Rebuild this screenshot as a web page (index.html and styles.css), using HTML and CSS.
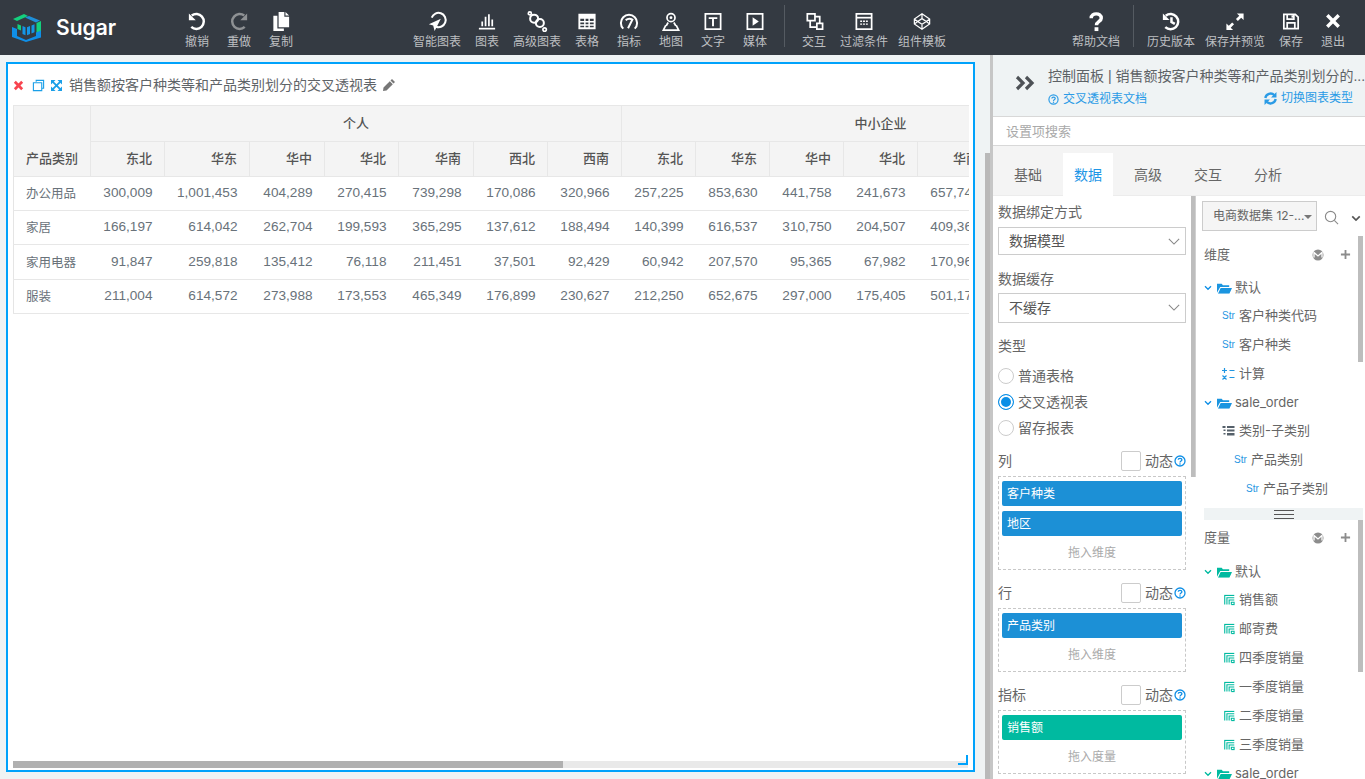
FILE: index.html
```html
<!DOCTYPE html>
<html lang="zh">
<head>
<meta charset="utf-8">
<title>Sugar</title>
<link rel="stylesheet" href="styles.css">
</head>
<body>
<svg class="defs" width="0" height="0" aria-hidden="true">
  <symbol id="folder" viewBox="0 0 16 12"><path d="M0 11V1.500h5l1.300 1.500H13v2H3.400L0 11zM3.900 6H16l-2.800 6H1z" fill="currentColor"/></symbol>
  <symbol id="measure" viewBox="0 0 12 12"><path d="M.8 11V1h10.400M3.200 11V3.600h8M5.600 11V6h5.600M8 11V8.400h3V11H8" fill="none" stroke="currentColor" stroke-width="1.200"/></symbol>
  <symbol id="help" viewBox="0 0 12 12"><circle cx="6" cy="6" r="5" fill="none" stroke="currentColor" stroke-width="1.300"/><path d="M4.200 4.800C4.200 2.900 7.900 2.900 7.900 4.800 7.900 6 6 6 6 7.500" fill="none" stroke="currentColor" stroke-width="1.300"/><circle cx="6" cy="9" r=".8" fill="currentColor"/></symbol>
  <symbol id="chev" viewBox="0 0 12 8"><path d="M1.500 1.500L6 6l4.500-4.500" fill="none" stroke="currentColor" stroke-width="2"/></symbol>
  <symbol id="thin" viewBox="0 0 14 8"><path d="M1 1l6 6 6-6" fill="none" stroke="currentColor" stroke-width="1.300"/></symbol>
  <symbol id="mono" viewBox="0 0 12 12"><circle cx="6" cy="6" r="5.500" fill="currentColor"/><path d="M2 8.500V3.500L6 7l4-3.500v5" fill="none" stroke="#fff" stroke-width="1.300"/></symbol>
  <symbol id="plus" viewBox="0 0 12 12"><path d="M6 1v10M1 6h10" stroke="currentColor" stroke-width="2"/></symbol>
</svg>

<header class="topbar">
  <div class="logo">
    <svg class="logo-mark" viewBox="0 0 29 29">
      <path d="M1 6L12 1l4 2L5 8z" fill="#14d07e"/>
      <path d="M13 4.500L17 3l11 4.500-4 2z" fill="#1f8fd8"/>
      <path d="M24.500 10L29 8v10l-4.500 2z" fill="#14d07e"/>
      <path d="M0 14l5 2v7l9 4 10-4v-3.500l5-2V24.500L14 29 0 24z" fill="#0f8fe8"/>
      <path d="M5.500 11L9 12.500v5l-3.500-1.500z" fill="#14d07e"/>
      <path d="M10.500 13l3 1.200v8l-3-1.200zM15 14.200l3-1.200v8l-3 1.200zM19.500 12.500l3-1.200v8l-3 1.200z" fill="#1596e6"/>
    </svg>
    <span class="logo-text">Sugar</span>
  </div>

  <nav class="tool-group">
    <div class="tool"><svg class="ic" viewBox="0 0 22 22"><path d="M5.500 4.800A7.800 7.800 0 1 1 5 16.700"/><path class="solid" d="M2.500 2.500v7.200h7.200z"/></svg><span>撤销</span></div>
    <div class="tool is-off"><svg class="ic" viewBox="0 0 22 22"><path d="M16.500 4.800A7.800 7.800 0 1 0 17 16.700"/><path class="solid" d="M19.500 2.500v7.200h-7.200z"/></svg><span>重做</span></div>
    <div class="tool"><svg class="ic" viewBox="0 0 22 22"><path class="solid" d="M8.500 1h6v5h5v11h-11zM15.700 1l3.800 3.800h-3.800zM3 5h4.200v13.300H14V21H3z"/></svg><span>复制</span></div>
  </nav>

  <nav class="tool-group center">
    <div class="tool wide"><svg class="ic" viewBox="0 0 22 22"><path class="mid" d="M10 16.500A7.500 7.500 0 1 0 5.500 7"/><path class="solid" d="M15 8L2.500 14l4.500 1.300L8.500 21z"/></svg><span>智能图表</span></div>
    <div class="tool"><svg class="ic" viewBox="0 0 22 22"><path class="thin" d="M2.500 18.500h17"/><path class="thin" d="M6 16v-5M9.500 16V6M13 16V3.500M16.500 16v-7"/></svg><span>图表</span></div>
    <div class="tool wide"><svg class="ic" viewBox="0 0 22 22"><circle class="mid" cx="8" cy="8" r="4.200"/><circle class="mid" cx="14" cy="12.500" r="4.200"/><circle class="thin" cx="3.500" cy="2.500" r="1.600"/><circle class="thin" cx="19" cy="19.500" r="1.800"/></svg><span>高级图表</span></div>
    <div class="tool"><svg class="ic" viewBox="0 0 22 22"><path class="solid" fill-rule="evenodd" d="M2 3h18v16H2zM4 8v2.500h4V8zm5.500 0v2.500h3V8zm4.500 0v2.500h4V8zM4 12v2h4v-2zm5.500 0v2h3v-2zm4.500 0v2h4v-2zM4 15.500V17h4v-1.500zm5.500 0V17h3v-1.500zm4.500 0V17h4v-1.500z"/></svg><span>表格</span></div>
    <div class="tool"><svg class="ic" viewBox="0 0 22 22"><path class="mid" d="M5 18.500A8.500 8.500 0 1 1 17 18.500"/><path class="mid" d="M7.500 9.500Q11 7 14.500 9L10 18"/></svg><span>指标</span></div>
    <div class="tool"><svg class="ic" viewBox="0 0 22 22"><circle class="thin" cx="11" cy="7" r="4.200"/><circle class="solid" cx="11" cy="7" r="1.500"/><path class="thin" d="M8 12L6 15.500M14 12l2 3.500M5.500 15L3 20h16l-2.500-5"/></svg><span>地图</span></div>
    <div class="tool"><svg class="ic" viewBox="0 0 22 22"><rect class="thin" x="3" y="3" width="16" height="16"/><path class="solid" d="M6.500 6.500h9v2h-3.500V16h-2V8.500H6.500z"/></svg><span>文字</span></div>
    <div class="tool"><svg class="ic" viewBox="0 0 22 22"><rect class="thin" x="3" y="3" width="16" height="16"/><path class="solid" d="M8.500 6.500l6.500 4.500-6.500 4.500z"/></svg><span>媒体</span></div>
    <i class="rule"></i>
    <div class="tool"><svg class="ic" viewBox="0 0 22 22"><path class="thin" d="M4 3h8v7H4zM14 13h6v6h-6zM7 10v7h7M12 6h5v7"/></svg><span>交互</span></div>
    <div class="tool wide"><svg class="ic" viewBox="0 0 22 22"><rect class="thin" x="3" y="3" width="16" height="16"/><path class="thin" d="M3 7h16"/><path class="solid" d="M7 10h2v1.500H7zM10 10h2v1.500h-2zM13 10h2v1.500h-2zM7 13h2v1.500H7zM10 13h2v1.500h-2zM13 13h2v1.500h-2z"/></svg><span>过滤条件</span></div>
    <div class="tool wide"><svg class="ic" viewBox="0 0 22 22"><path class="hair" d="M11 3l8 5.500v5L11 19l-8-5.500v-5zM11 3v5l-4.500 3L3 8.500M11 8l4.500 3L19 8.500M6.500 11L3 13.500M15.500 11l3.500 2.500M6.500 11l4.500 3 4.500-3M11 14v5"/></svg><span>组件模板</span></div>
  </nav>

  <nav class="tool-group end">
    <div class="tool wide"><svg class="ic" viewBox="0 0 22 22"><path class="bold" d="M6 7.500C6 1.500 16.500 1.500 16.500 7.500 16.500 11 11.500 10.800 11.500 15"/><rect class="solid" x="9.500" y="17" width="4" height="4"/></svg><span>帮助文档</span></div>
    <i class="rule"></i>
    <div class="tool wide"><svg class="ic" viewBox="0 0 22 22"><path d="M5.500 5A8 8 0 1 1 5 17"/><path class="solid" d="M2.500 2.500v7h7z"/><path d="M11.500 6.500V11.500L15 13.500"/></svg><span>历史版本</span></div>
    <div class="tool wider"><svg class="ic" viewBox="0 0 22 22"><path class="solid" d="M13 2.500h7v7l-2.500-2.500-3.500 3.500-2-2 3.500-3.500zM9 20H2v-7l2.500 2.500L8 12l2 2-3.500 3.500z"/></svg><span>保存并预览</span></div>
    <div class="tool"><svg class="ic" viewBox="0 0 22 22"><path class="thin" d="M3.500 3.500h12l3 3v12h-15z"/><path class="thin" d="M7 3.500v5h7v-5M7 18.500v-6h8v6"/><path class="solid" d="M11.500 4.500h2V7h-2z"/></svg><span>保存</span></div>
    <div class="tool"><svg class="ic" viewBox="0 0 22 22"><path class="bold" d="M5 4.500l12 12M17 4.500l-12 12"/></svg><span>退出</span></div>
  </nav>
</header>

<main class="workspace">
  <section class="canvas">
    <article class="widget">
      <div class="widget-title">
        <svg class="wi red" viewBox="0 0 12 12"><path d="M2 2l8 8M10 2l-8 8" stroke="currentColor" stroke-width="3"/></svg>
        <svg class="wi blue" viewBox="0 0 14 14"><path d="M4.500 3V1.500h8V10H11M1.500 4h9v8.500h-9z" fill="none" stroke="currentColor" stroke-width="1.200"/></svg>
        <svg class="wi blue" viewBox="0 0 12 12"><path d="M0 0h5L0 5zM12 0v5L7 0zM0 12V7l5 5zM12 12H7l5-5z" fill="currentColor"/><path d="M2 2l8 8M10 2l-8 8" stroke="currentColor" stroke-width="2"/></svg>
        <h1>销售额按客户种类等和产品类别划分的交叉透视表</h1>
        <svg class="wi pencil" viewBox="0 0 14 14"><path d="M10 1l3 3-1.500 1.500-3-3zM7.800 3.200l3 3L4.500 12.500 1 13l.5-3.500z" fill="currentColor"/></svg>
      </div>
      <div class="table-clip">
        <table class="pivot">
          <colgroup>
            <col class="c77"><col class="c74"><col class="c85"><col class="c75"><col class="c74"><col class="c75"><col class="c74"><col class="c74">
            <col class="c74"><col class="c74"><col class="c74"><col class="c74"><col class="c74"><col class="c74"><col class="c74">
          </colgroup>
          <thead>
            <tr class="h1"><th class="first blank"></th><th colspan="7" class="mid">个人</th><th colspan="7" class="mid">中小企业</th></tr>
            <tr class="h2"><th class="first">产品类别</th><th>东北</th><th>华东</th><th>华中</th><th>华北</th><th>华南</th><th>西北</th><th>西南</th><th>东北</th><th>华东</th><th>华中</th><th>华北</th><th>华南</th><th></th><th></th></tr>
          </thead>
          <tbody>
            <tr class="r34"><td class="first">办公用品</td><td>300,009</td><td>1,001,453</td><td>404,289</td><td>270,415</td><td>739,298</td><td>170,086</td><td>320,966</td><td>257,225</td><td>853,630</td><td>441,758</td><td>241,673</td><td>657,748</td><td></td><td></td></tr>
            <tr class="r34"><td class="first">家居</td><td>166,197</td><td>614,042</td><td>262,704</td><td>199,593</td><td>365,295</td><td>137,612</td><td>188,494</td><td>140,399</td><td>616,537</td><td>310,750</td><td>204,507</td><td>409,361</td><td></td><td></td></tr>
            <tr class="r35"><td class="first">家用电器</td><td>91,847</td><td>259,818</td><td>135,412</td><td>76,118</td><td>211,451</td><td>37,501</td><td>92,429</td><td>60,942</td><td>207,570</td><td>95,365</td><td>67,982</td><td>170,961</td><td></td><td></td></tr>
            <tr class="r34"><td class="first">服装</td><td>211,004</td><td>614,572</td><td>273,988</td><td>173,553</td><td>465,349</td><td>176,899</td><td>230,627</td><td>212,250</td><td>652,675</td><td>297,000</td><td>175,405</td><td>501,171</td><td></td><td></td></tr>
          </tbody>
        </table>
      </div>
      <div class="hscroll"><div class="hscroll-thumb"></div></div>
      <i class="resize"></i>
    </article>
  </section>
  <div class="vscroll"><div class="vscroll-thumb"></div></div>

  <aside class="panel">
    <div class="panel-head">
      <svg class="collapse" viewBox="0 0 20 16"><path d="M2 2l6 6-6 6M11 2l6 6-6 6" fill="none" stroke="currentColor" stroke-width="3.200"/></svg>
      <div class="panel-head-text">
        <div class="panel-title">控制面板 | 销售额按客户种类等和产品类别划分的...</div>
        <div class="panel-links">
          <a class="plink doc"><svg class="h11" viewBox="0 0 12 12"><use href="#help"/></svg>交叉透视表文档</a>
          <a class="plink swap"><svg class="h13" viewBox="0 0 12 12"><path d="M1.200 5.500A5 5 0 0 1 9.500 2.800M10.800 6.500A5 5 0 0 1 2.500 9.200" fill="none" stroke="currentColor" stroke-width="2.200"/><path d="M11.500 0v5h-5zM.5 12V7h5z" fill="currentColor"/></svg>切换图表类型</a>
        </div>
      </div>
    </div>
    <div class="panel-search">设置项搜索</div>
    <div class="tabs"><span>基础</span><span class="active">数据</span><span>高级</span><span>交互</span><span>分析</span></div>

    <div class="panel-body">
      <div class="settings">
        <div class="settings-col">
          <label class="lab first-lab">数据绑定方式</label>
          <div class="sel s28">数据模型<svg class="sel-chev" viewBox="0 0 14 8"><use href="#thin"/></svg></div>
          <label class="lab">数据缓存</label>
          <div class="sel s30">不缓存<svg class="sel-chev" viewBox="0 0 14 8"><use href="#thin"/></svg></div>
          <label class="lab type-lab">类型</label>
          <div class="radio"><i class="dot"></i>普通表格</div>
          <div class="radio"><i class="dot on"></i>交叉透视表</div>
          <div class="radio"><i class="dot"></i>留存报表</div>

          <div class="field-head col-head"><span>列</span><span class="dyn"><i class="check"></i>动态<svg class="h12" viewBox="0 0 12 12"><use href="#help"/></svg></span></div>
          <div class="drop"><div class="chip">客户种类</div><div class="chip">地区</div><div class="hint">拖入维度</div></div>

          <div class="field-head"><span>行</span><span class="dyn"><i class="check"></i>动态<svg class="h12" viewBox="0 0 12 12"><use href="#help"/></svg></span></div>
          <div class="drop"><div class="chip">产品类别</div><div class="hint">拖入维度</div></div>

          <div class="field-head"><span>指标</span><span class="dyn"><i class="check"></i>动态<svg class="h12" viewBox="0 0 12 12"><use href="#help"/></svg></span></div>
          <div class="drop"><div class="chip green">销售额</div><div class="hint">拖入度量</div></div>
        </div>
        <div class="settings-bar"></div>
      </div>
      <div class="edge"></div>

      <div class="data">
        <div class="data-top">
          <div class="ds">电商数据集 12-...<i class="ds-caret"></i></div>
          <svg class="ds-search" viewBox="0 0 16 16"><circle cx="7" cy="7" r="5.500" fill="none" stroke="currentColor" stroke-width="1.200"/><path d="M11 11l4 4" stroke="currentColor" stroke-width="1.200"/></svg>
          <svg class="ds-chev" viewBox="0 0 12 8"><use href="#chev"/></svg>
        </div>
        <div class="pane dim-pane">
          <div class="pane-scroll">
            <div class="pane-head"><span>维度</span><svg class="ph-m" viewBox="0 0 12 12"><use href="#mono"/></svg><svg class="ph-p" viewBox="0 0 12 12"><use href="#plus"/></svg></div>
            <div class="node folder"><svg class="tw" viewBox="0 0 12 8"><use href="#chev"/></svg><svg class="fd" viewBox="0 0 16 12"><use href="#folder"/></svg>默认</div>
            <div class="node leaf"><span class="st">Str</span>客户种类代码</div>
            <div class="node leaf"><span class="st">Str</span>客户种类</div>
            <div class="node leaf"><svg class="ico calc" viewBox="0 0 13 12"><path d="M0 2.500h5M2.500 0v5M7.500 2.500h5M.5 7.500l4 4M4.500 7.500l-4 4M7.500 9.500h5" stroke="currentColor" stroke-width="1.200"/></svg>计算</div>
            <div class="node folder"><svg class="tw" viewBox="0 0 12 8"><use href="#chev"/></svg><svg class="fd" viewBox="0 0 16 12"><use href="#folder"/></svg>sale_order</div>
            <div class="node leaf"><svg class="ico tree" viewBox="0 0 12 10"><path d="M0 0h3v2H0zM4.500 0H12v2H4.500zM1 3.500h2v1.500H1zM4.500 3.500H12v2H4.500zM1 7h2v1.500H1zM4.500 7H12v2.500H4.500z" fill="currentColor"/></svg>类别-子类别</div>
            <div class="node leaf l2"><span class="st">Str</span>产品类别</div>
            <div class="node leaf l3"><span class="st">Str</span>产品子类别</div>
          </div>
          <div class="pane-bar"><div class="pane-thumb t1"></div></div>
        </div>
        <div class="splitter"><i></i></div>
        <div class="pane mea-pane">
          <div class="pane-scroll">
            <div class="pane-head mh"><span>度量</span><svg class="ph-m" viewBox="0 0 12 12"><use href="#mono"/></svg><svg class="ph-p" viewBox="0 0 12 12"><use href="#plus"/></svg></div>
            <div class="node folder teal"><svg class="tw" viewBox="0 0 12 8"><use href="#chev"/></svg><svg class="fd" viewBox="0 0 16 12"><use href="#folder"/></svg>默认</div>
            <div class="node leaf m"><svg class="ms" viewBox="0 0 12 12"><use href="#measure"/></svg>销售额</div>
            <div class="node leaf m"><svg class="ms" viewBox="0 0 12 12"><use href="#measure"/></svg>邮寄费</div>
            <div class="node leaf m"><svg class="ms" viewBox="0 0 12 12"><use href="#measure"/></svg>四季度销量</div>
            <div class="node leaf m"><svg class="ms" viewBox="0 0 12 12"><use href="#measure"/></svg>一季度销量</div>
            <div class="node leaf m"><svg class="ms" viewBox="0 0 12 12"><use href="#measure"/></svg>二季度销量</div>
            <div class="node leaf m"><svg class="ms" viewBox="0 0 12 12"><use href="#measure"/></svg>三季度销量</div>
            <div class="node leaf m last-folder"><svg class="tw" viewBox="0 0 12 8"><use href="#chev"/></svg><svg class="fd" viewBox="0 0 16 12"><use href="#folder"/></svg>sale_order</div>
          </div>
          <div class="pane-bar"><div class="pane-thumb t2"></div></div>
        </div>
      </div>
    </div>
  </aside>
</main>
</body>
</html>
```

FILE: styles.css
```css
* { box-sizing: border-box; }
html, body { height: 100%; }
body {
  margin: 0;
  height: 779px;
  overflow: hidden;
  display: flex;
  flex-direction: column;
  background: #eff3f4;
  color: #666;
  font: 13px/1.2 Inter, "Noto Sans CJK SC", sans-serif;
}
.defs { position: absolute; }

/* top bar */
.topbar { height: 55px; flex: none; display: flex; background: #343a42; color: #bdbfc1; }
.logo { width: 176px; display: flex; align-items: center; padding-left: 12px; }
.logo-mark { width: 29px; height: 29px; }
.logo-text { margin-left: 15px; color: #fff; font: 600 21px/1 Inter, sans-serif; }
.tool-group { display: flex; }
.tool-group.center { margin-left: 106px; }
.tool-group.end { margin-left: auto; padding-right: 11px; }
.tool { width: 42px; display: flex; flex-direction: column; align-items: center; padding-top: 11px; font-size: 12px; line-height: 15px; white-space: nowrap; }
.tool.wide { width: 58px; }
.tool.wider { width: 70px; }
.tool span { margin-top: 2px; }
.tool.is-off .ic { color: #8e9194; }
.ic { width: 22px; height: 21px; color: #fff; fill: none; stroke: currentColor; stroke-width: 2.600; }
.ic .solid { fill: currentColor; stroke: none; }
.ic .mid { stroke-width: 2.100; }
.ic .thin { stroke-width: 1.800; }
.ic .hair { stroke-width: 1.300; }
.ic .bold { stroke-width: 3.600; }
.rule { width: 1px; height: 42px; margin: 5px 8px 0; background: #555b62; }

/* layout */
.workspace { flex: 1; min-height: 0; display: flex; }
.canvas { width: 985px; flex: none; padding: 7px 0 0 6px; }
.vscroll { width: 5px; flex: none; background: #eff3f4; }
.vscroll-thumb { height: 626px; margin-top: 98px; background: #b9b9b9; }

/* widget */
.widget { position: relative; width: 969px; height: 710px; border: 2px solid #00a2fb; background: #fff; padding: 0 4px 2px 5px; display: flex; flex-direction: column; }
.widget-title { height: 41px; flex: none; display: flex; align-items: center; padding-top: 1px; }
.wi { flex: none; }
.red { width: 11px; height: 11px; color: #f8444f; margin-right: 8px; }
.blue { width: 13px; height: 13px; color: #1a9fe8; margin-right: 6px; }
.blue + .blue { width: 11px; height: 11px; margin-right: 7px; }
.widget-title h1 { margin: 0; font-size: 14px; font-weight: 400; color: #5f6468; }
.pencil { width: 14px; height: 14px; margin-left: 5px; color: #777; }

.table-clip { flex: 1; min-height: 0; overflow: hidden; }
.pivot { table-layout: fixed; width: 1126px; border-collapse: collapse; border-left: 1px solid #e5e5e5; }
.c77 { width: 77px; } .c74 { width: 74px; } .c75 { width: 75px; } .c85 { width: 85px; }
.pivot th { background: #f4f4f4; border: 1px solid #e7e7e7; padding: 0 12px 0 0; text-align: right; font-weight: 500; font-size: 13px; color: #555; }
.pivot th.mid { text-align: center; padding: 0; }
.pivot .first { text-align: left; padding-left: 12px; }
.pivot th.blank { border-bottom: 0; }
.pivot .h2 th.first { border-top: 0; }
.pivot td { border-bottom: 1px solid #e7e7e7; padding: 0 12px 2px 0; text-align: right; font: 13.600px "Liberation Sans", "Noto Sans CJK SC", sans-serif; color: #69727a; white-space: nowrap; }
.pivot td.first { font: 12.500px "Noto Sans CJK SC", sans-serif; }
.h1 { height: 36px; } .h2 { height: 35px; }
.r34 { height: 34px; } .r35 { height: 35px; }

.hscroll { height: 7px; flex: none; background: #e9e9e9; margin-right: 1px; }
.hscroll-thumb { width: 550px; height: 7px; background: #b0b0b0; }
.resize { position: absolute; right: 5px; bottom: 5px; width: 10px; height: 10px; border: solid #00a2fb; border-width: 0 2px 2px 0; }

/* panel */
.panel { flex: 1; min-width: 0; display: flex; flex-direction: column; border-left: 3px solid #c6c6c6; }
.panel-head { height: 62px; flex: none; background: #eff3f4; display: flex; padding: 12px 0 0 22px; border-bottom: 1px solid #d8d8d8; }
.collapse { width: 20px; height: 16px; margin-top: 8px; color: #4d5156; flex: none; }
.panel-head-text { width: 317px; flex: none; margin-left: 13px; }
.panel-title { font: 14px/18px "Liberation Sans", "Noto Sans CJK SC", sans-serif; color: #5d6266; white-space: nowrap; }
.panel-links { display: flex; justify-content: space-between; padding-right: 12px; margin-top: 4px; }
.plink { display: flex; align-items: center; font-size: 12px; line-height: 16px; color: #2a9be6; }
.doc { margin-top: 2px; }
.h11 { width: 11px; height: 11px; margin-right: 4px; }
.h13 { width: 13px; height: 13px; margin-right: 4px; }
.panel-search { height: 29px; flex: none; background: #fff; border-bottom: 1px solid #d8d8d8; padding-left: 13px; font-size: 13px; line-height: 29px; color: #a9a9a9; }
.tabs { height: 50px; flex: none; background: #f4f4f4; display: flex; gap: 10px; padding: 7px 0 0 10px; border-bottom: 1px solid #ececec; }
.tabs span { width: 50px; height: 43px; text-align: center; font-size: 14px; line-height: 43px; color: #666; }
.tabs .active { background: #fff; color: #1e96e6; }

.panel-body { flex: 1; min-height: 0; display: flex; overflow: hidden; background: #fff; }
.settings { width: 202px; flex: none; display: flex; overflow: hidden; }
.settings-col { width: 198px; flex: none; padding-left: 5px; }
.settings-bar { width: 4px; height: 281px; background: #bdbdbd; flex: none; }
.edge { width: 1px; flex: none; height: 281px; background: #d0d0d0; }

.lab { display: block; font-size: 14px; line-height: 20px; color: #666; }
.first-lab { margin-top: 6px; }
.sel { position: relative; width: 188px; border: 1px solid #ccc; font-size: 14px; color: #555; padding-left: 10px; }
.s28 { height: 28px; line-height: 26px; margin: 5px 0 14px; }
.s30 { height: 30px; line-height: 28px; margin: 4px 0 13px; }
.sel-chev { position: absolute; right: 5px; top: 10px; width: 12px; height: 7px; color: #888; }
.type-lab { margin-bottom: 7px; }
.radio { display: flex; align-items: center; height: 26px; font-size: 14px; color: #666; }
.dot { width: 16px; height: 16px; margin-right: 4px; border: 1px solid #ccc; border-radius: 50%; flex: none; }
.dot.on { border-color: #0b8fe6; background: #0b8fe6; box-shadow: inset 0 0 0 2px #fff; }

.field-head { display: flex; justify-content: space-between; align-items: flex-end; width: 188px; height: 20px; font-size: 14px; line-height: 20px; margin: 13px 0 5px; }
.col-head { margin-top: 10px; }
.dyn { display: flex; align-items: center; }
.check { width: 20px; height: 20px; margin-right: 4px; border: 1px solid #ccc; border-radius: 2px; }
.h12 { width: 12px; height: 12px; margin-left: 1px; color: #0f8fe6; }
.drop { width: 188px; border: 1px dashed #c8c8c8; padding: 4px 3px 2px; }
.chip { height: 25px; margin-bottom: 5px; padding-left: 5px; background: #1c90d6; border-radius: 2px; color: #fff; font-size: 12px; line-height: 25px; }
.chip.green { background: #00baa0; }
.hint { height: 28px; margin-top: -2px; text-align: center; font-size: 12px; line-height: 28px; color: #aaa; }

.data { flex: 1; min-width: 0; padding-left: 6px; display: flex; flex-direction: column; }
.data-top { height: 40px; flex: none; display: flex; align-items: flex-start; padding-top: 5px; }
.ds { position: relative; width: 115px; height: 30px; border: 1px solid #ccc; background: #f5f5f5; padding-left: 10px; font-size: 12px; line-height: 28px; color: #666; white-space: nowrap; }
.ds-caret { position: absolute; right: 4px; top: 13px; border: 4px solid transparent; border-top: 4px solid #777; border-bottom: 0; }
.ds-search { width: 15px; height: 15px; margin: 9px 0 0 7px; color: #8a8a8a; flex: none; }
.ds-chev { width: 10px; height: 7px; margin: 14px 0 0 12px; color: #555; flex: none; }
.pane { display: flex; flex: none; overflow: hidden; }
.dim-pane { height: 272px; }
.mea-pane { flex: 1; }
.pane-scroll { width: 156px; flex: none; padding-left: 2px; }
.pane-bar { width: 5px; flex: none; }
.pane-thumb { background: #bdbdbd; }
.t1 { height: 126px; }
.t2 { height: 152px; }
.pane-head { height: 37px; display: flex; align-items: center; font-size: 13px; color: #666; }
.pane-head.mh { padding-bottom: 2px; }
.pane-head span { width: 108px; }
.ph-m { width: 12px; height: 12px; color: #8c8c8c; }
.ph-p { width: 11px; height: 11px; margin-left: 16px; color: #8c8c8c; }
.node { height: 29px; display: flex; align-items: center; font-size: 13px; color: #666; white-space: nowrap; }
.folder { height: 28px; padding-top: 2px; }
.tw { width: 8px; height: 6px; color: #0f8fe6; margin-right: 5px; flex: none; }
.fd { width: 15px; height: 12px; color: #1b95e0; margin-right: 3px; flex: none; }
.teal .tw, .teal .fd, .last-folder .tw, .last-folder .fd { color: #00baa0; }
.leaf { padding-left: 18px; }
.l2 { padding-left: 30px; }
.l3 { padding-left: 42px; }
.st { width: 13px; margin-right: 4px; color: #1f96e2; font: 10px/1 "Liberation Sans", sans-serif; flex: none; }
.ico { width: 13px; margin-right: 4px; flex: none; }
.calc { height: 12px; color: #1f96e2; }
.tree { height: 10px; color: #55606a; }
.m { padding-left: 20px; }
.ms { width: 11px; height: 12px; color: #00baa0; margin-right: 4px; flex: none; }
.last-folder { padding-left: 0; }
.splitter { height: 12px; flex: none; margin: 0 2px; background: #eff3f4; display: flex; justify-content: center; align-items: center; }
.splitter i { width: 20px; height: 9px; border-top: 1px solid #555; border-bottom: 1px solid #555; background: linear-gradient(#555, #555) center / 100% 1px no-repeat; }
```
